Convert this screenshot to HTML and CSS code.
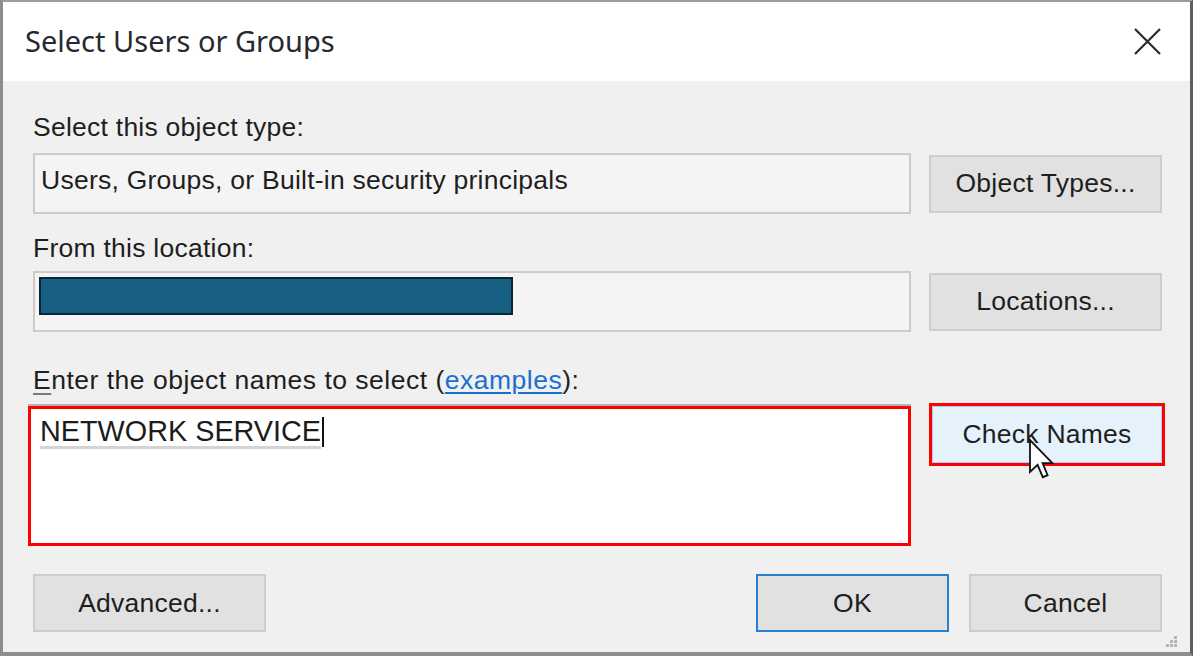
FILE: index.html
```html
<!DOCTYPE html>
<html>
<head>
<meta charset="utf-8">
<link rel="stylesheet" href="styles.css">
</head>
<body>
<div class="window">
  <div class="titlebar">
    <span class="title">Select Users or Groups</span>
    <svg class="close" width="27" height="27" viewBox="0 0 27 27"><path d="M1 1 L26 26 M26 1 L1 26" stroke="#2b2b2b" stroke-width="2.2" fill="none"/></svg>
  </div>
  <div class="content">
    <div class="label l1">Select this object type:</div>
    <div class="row">
      <div class="field ro">Users, Groups, or Built-in security principals</div>
      <div class="btn">Object Types...</div>
    </div>
    <div class="label l2">From this location:</div>
    <div class="row">
      <div class="field ro loc"><div class="redact"></div></div>
      <div class="btn">Locations...</div>
    </div>
    <div class="label l3"><span class="acc">E</span>nter the object names to select (<span class="link">examples</span>):</div>
    <div class="row names">
      <div class="namebox"><span class="typed">NETWORK SERVICE</span><span class="caret"></span></div>
      <div class="hl"><div class="btn hover">Check Names</div></div>
    </div>
    <div class="footer">
      <div class="btn">Advanced...</div>
      <div class="right">
        <div class="btn default">OK</div>
        <div class="btn">Cancel</div>
      </div>
    </div>
  </div>
  <svg class="pointer" width="26" height="44" viewBox="0 0 13 22"><path d="M1 1 L1 17 L4.8 13.4 L7.4 19.6 L9.8 18.6 L7.3 12.6 L12.2 12.6 Z" fill="#fff" stroke="#111" stroke-width="0.9" stroke-linejoin="miter"/></svg>
  <svg class="grip" width="16" height="16" viewBox="0 0 16 16"><g fill="#b5b5b5"><rect x="12" y="2" width="3" height="3"/><rect x="8" y="6" width="3" height="3"/><rect x="12" y="6" width="3" height="3"/><rect x="4" y="10" width="3" height="3"/><rect x="8" y="10" width="3" height="3"/><rect x="12" y="10" width="3" height="3"/></g></svg>
</div>
</body>
</html>
```
FILE: styles.css
```css
html, body {
  margin: 0;
  padding: 0;
  background: #f0f0f0;
}
.window {
  position: relative;
  width: 1193px;
  height: 656px;
  box-sizing: border-box;
  border-top: 2px solid #9c9c9c;
  border-left: 3px solid #8c8c8c;
  border-right: 3px solid #5e5e5e;
  border-bottom: 4px solid #8e8e8e;
  display: flex;
  flex-direction: column;
  background: #f0f0f0;
  font-family: "Liberation Sans", Arial, sans-serif;
  font-size: 26.5px;
  letter-spacing: 0.25px;
  color: #1e1e1e;
  overflow: hidden;
}
.titlebar {
  height: 79px;
  flex: none;
  background: #ffffff;
  display: flex;
  align-items: center;
  justify-content: space-between;
  padding: 0 29px 0 22px;
}
.title {
  font-family: "Noto Sans", "Open Sans", sans-serif;
  font-size: 29px;
  letter-spacing: 0;
  color: #262a30;
  margin-top: -2px;
}
.close {
  display: block;
}
.content {
  flex: 1;
  padding: 0 28px 0 30px;
  display: flex;
  flex-direction: column;
}
.label {
  line-height: 30px;
  height: 30px;
  white-space: nowrap;
}
.l1 { margin-top: 31px; margin-bottom: 11px; }
.l2 { margin-top: 19px; margin-bottom: 8px; }
.l3 { margin-top: 33px; margin-bottom: 8px; letter-spacing: 0.5px; }
.acc {
  text-decoration: underline;
  text-decoration-color: #7a7a7a;
  text-underline-offset: 4px;
}
.link {
  color: #1a6fcf;
  text-decoration: underline;
  text-underline-offset: 3px;
}
.row {
  display: grid;
  grid-template-columns: 878px 233px;
  column-gap: 18px;
  align-items: center;
}
.field {
  height: 61px;
  box-sizing: border-box;
  border: 2px solid #cbcbcb;
  background: #f4f4f4;
  padding: 10px 6px;
  line-height: 30px;
  white-space: nowrap;
}
.loc {
  padding: 4px;
}
.redact {
  width: 470px;
  height: 34px;
  background: #176084;
  border: 2px solid #0c2434;
}
.btn {
  height: 58px;
  box-sizing: border-box;
  border: 2px solid #cdcdcd;
  background: #e1e1e1;
  display: flex;
  align-items: center;
  justify-content: center;
  line-height: 30px;
  padding-bottom: 1px;
  white-space: nowrap;
}
.names {
  align-items: start;
}
.namebox {
  margin-left: -5px;
  margin-top: 3px;
  height: 140px;
  box-sizing: border-box;
  border: 3px solid #ff0000;
  background: #ffffff;
  box-shadow: 0 -2px 0 #b4b4b4;
  padding: 7px 9px;
  font-family: "Liberation Sans", Arial, sans-serif;
  font-size: 28.8px;
  letter-spacing: 0;
  line-height: 34px;
  color: #1c1c1c;
  display: flex;
  align-items: flex-start;
}
.typed {
  border-bottom: 3px solid #d4d4d4;
  line-height: 30px;
}
.caret {
  width: 2px;
  height: 30px;
  background: #111;
  margin-left: 1px;
  margin-top: 1px;
}
.hl {
  height: 63px;
  width: 236px;
  box-sizing: border-box;
  border: 3px solid #ff0000;
  background: #ffffff;
}
.btn.hover {
  height: 57px;
  border: 1px solid #a9cdf0;
  background: #e5f1fb;
}
.footer {
  margin-top: 28px;
  display: flex;
  justify-content: space-between;
  align-items: center;
}
.footer > .btn {
  width: 233px;
}
.right {
  display: flex;
  gap: 20px;
}
.right .btn {
  width: 193px;
}
.btn.default {
  border: 2px solid #2a7ed6;
}
.pointer {
  position: absolute;
  left: 1025px;
  top: 436px;
}
.grip {
  position: absolute;
  right: 12px;
  bottom: 2px;
}
```
